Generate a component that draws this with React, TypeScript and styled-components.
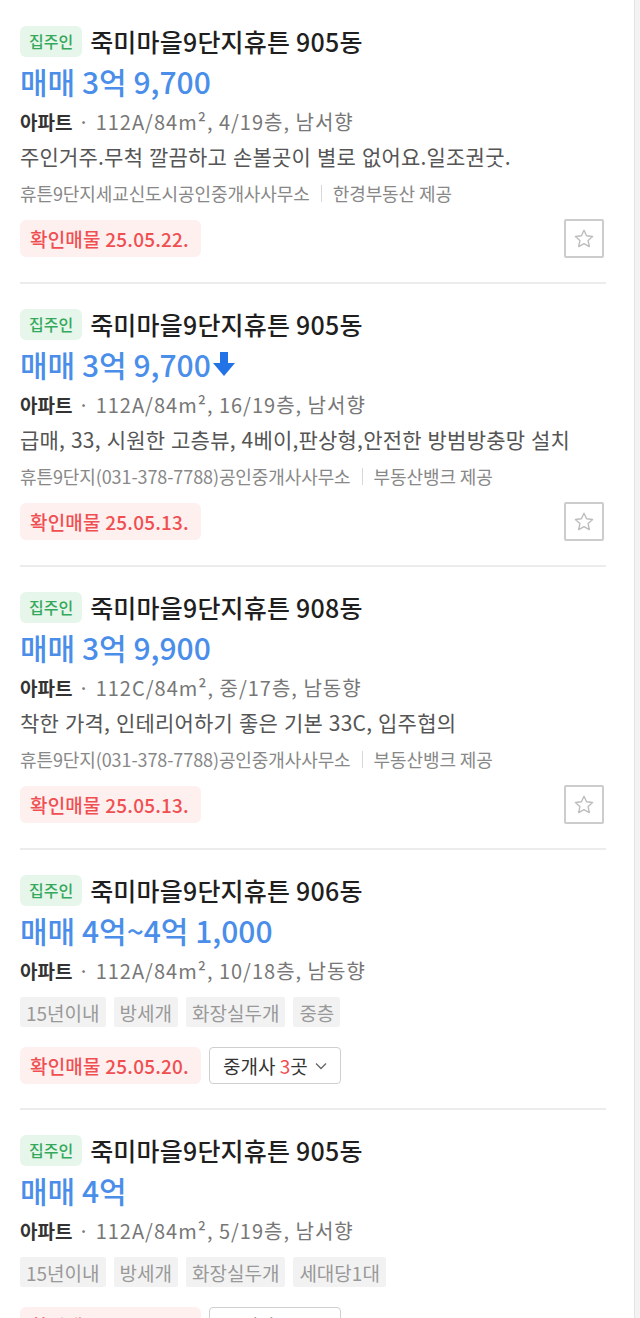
import React from "react";
import styled, { createGlobalStyle } from "styled-components";

const GlobalStyle = createGlobalStyle`
  html, body {
    margin: 0;
    padding: 0;
    background: #ffffff;
    overflow: hidden;
  }
  body {
    font-family: "Noto Sans CJK KR", "Noto Sans", sans-serif;
    -webkit-font-smoothing: antialiased;
  }
  * { box-sizing: border-box; }
`;

const Page = styled.div`
  display: flex;
  width: 640px;
  height: 1318px;
  overflow: hidden;
  background: #fff;
`;

const List = styled.ul`
  flex: 1;
  margin: 0;
  padding: 1px 28px 0 20px;
  list-style: none;
`;

const Gutter = styled.div`
  width: 6px;
  flex-shrink: 0;
  background: #f3f3f3;
  border-left: 1px solid #e4e4e4;
`;

const Item = styled.li`
  display: flex;
  flex-direction: column;
  padding: 24px 0 24px;
  border-bottom: 2px solid #ececec;
`;

const TitleRow = styled.div`
  display: flex;
  align-items: center;
  gap: 8px;
  height: 32px;
`;

const OwnerTag = styled.span`
  display: inline-flex;
  align-items: center;
  height: 31px;
  padding: 0 9px;
  border-radius: 6px;
  background: #e7f6eb;
  color: #34a95c;
  font-size: 16px;
  font-weight: 500;
`;

const Title = styled.h3`
  margin: 0;
  font-size: 25px;
  font-weight: 500;
  color: #1f1f1f;
  letter-spacing: 0.2px;
`;

const Price = styled.div`
  display: flex;
  align-items: center;
  gap: 1px;
  margin-top: 6px;
  height: 36px;
  font-size: 30px;
  font-weight: 500;
  color: #4a8eea;
`;

const Info = styled.div`
  margin-top: 6px;
  line-height: 34px;
  font-size: 20px;
  color: #777;
  font-weight: 400;
  letter-spacing: 1px;
  white-space: nowrap;
`;

const TypeName = styled.strong`
  color: #333;
  font-weight: 700;
  font-size: 19px;
  letter-spacing: 0;
`;

const Desc = styled.div`
  line-height: 34px;
  font-size: 21px;
  color: #555;
  letter-spacing: 0.2px;
  word-spacing: 1px;
  white-space: nowrap;
`;

const BrokerLine = styled.div`
  display: flex;
  align-items: center;
  margin-top: 8px;
  line-height: 24px;
  font-size: 18px;
  color: #888;
  letter-spacing: -0.1px;
  white-space: nowrap;
`;

const Divider = styled.span`
  width: 1px;
  height: 17px;
  margin: 0 11px;
  background: #d8d8d8;
`;

const Chips = styled.div`
  display: flex;
  gap: 8px;
  margin-top: 9px;
`;

const Chip = styled.span`
  display: inline-flex;
  align-items: center;
  height: 30px;
  padding: 0 6px;
  border-radius: 2px;
  background: #f2f2f2;
  color: #999;
  font-size: 19px;
`;

const Footer = styled.div<{ $gap: number }>`
  display: flex;
  align-items: center;
  gap: 8px;
  margin-top: ${(p) => p.$gap}px;
`;

const Confirm = styled.span`
  display: inline-flex;
  align-items: center;
  height: 37px;
  padding: 0 12px 0 10px;
  border-radius: 6px;
  background: #fff0f0;
  color: #f04f52;
  font-size: 19px;
  font-weight: 500;
  letter-spacing: 0.2px;
`;

const BrokerButton = styled.button`
  display: inline-flex;
  align-items: center;
  gap: 7px;
  height: 37px;
  padding: 0 13px;
  border: 1px solid #cfcfcf;
  border-radius: 4px;
  background: #fff;
  color: #333;
  font-family: inherit;
  font-size: 19px;
`;

const Count = styled.span`
  color: #f04f52;
`;

const StarButton = styled.button`
  display: inline-flex;
  align-items: center;
  justify-content: center;
  width: 40px;
  height: 39px;
  margin-left: auto;
  margin-right: 2px;
  padding: 0;
  border: 2px solid #cccccc;
  border-radius: 2px;
  background: #fff;
`;

const DownArrow = () => (
  <svg width="24" height="26" viewBox="0 0 24 26" aria-hidden>
    <path d="M8 1h8v11h7L12 25 1 12h7z" fill="#2274e6" />
  </svg>
);

const StarIcon = () => (
  <svg width="24" height="24" viewBox="0 0 24 24" aria-hidden>
    <path
      d="M12 3.2l2.6 5.6 6 .7-4.5 4.1 1.2 6-5.3-3-5.3 3 1.2-6-4.5-4.1 6-.7z"
      fill="none"
      stroke="#bdbdbd"
      strokeWidth="1.4"
      strokeLinejoin="round"
    />
  </svg>
);

const Chevron = () => (
  <svg width="12" height="8" viewBox="0 0 12 8" aria-hidden>
    <path d="M1 1.5l5 5 5-5" fill="none" stroke="#666" strokeWidth="1.3" />
  </svg>
);

type Listing = {
  dong: string;
  price: string;
  drop?: boolean;
  spec: string;
  desc?: string;
  broker?: string;
  provider?: string;
  chips?: string[];
  confirm: string;
  brokers?: number;
};

const listings: Listing[] = [
  {
    dong: "905동",
    price: "매매 3억 9,700",
    spec: "112A/84m², 4/19층, 남서향",
    desc: "주인거주.무척 깔끔하고 손볼곳이 별로 없어요.일조권굿.",
    broker: "휴튼9단지세교신도시공인중개사사무소",
    provider: "한경부동산 제공",
    confirm: "25.05.22.",
  },
  {
    dong: "905동",
    price: "매매 3억 9,700",
    drop: true,
    spec: "112A/84m², 16/19층, 남서향",
    desc: "급매, 33, 시원한 고층뷰, 4베이,판상형,안전한 방범방충망 설치",
    broker: "휴튼9단지(031-378-7788)공인중개사사무소",
    provider: "부동산뱅크 제공",
    confirm: "25.05.13.",
  },
  {
    dong: "908동",
    price: "매매 3억 9,900",
    spec: "112C/84m², 중/17층, 남동향",
    desc: "착한 가격, 인테리어하기 좋은 기본 33C, 입주협의",
    broker: "휴튼9단지(031-378-7788)공인중개사사무소",
    provider: "부동산뱅크 제공",
    confirm: "25.05.13.",
  },
  {
    dong: "906동",
    price: "매매 4억~4억 1,000",
    spec: "112A/84m², 10/18층, 남동향",
    chips: ["15년이내", "방세개", "화장실두개", "중층"],
    confirm: "25.05.20.",
    brokers: 3,
  },
  {
    dong: "905동",
    price: "매매 4억",
    spec: "112A/84m², 5/19층, 남서향",
    chips: ["15년이내", "방세개", "화장실두개", "세대당1대"],
    confirm: "25.05.17.",
    brokers: 2,
  },
];

export default function App() {
  return (
    <>
      <GlobalStyle />
      <Page>
        <List>
          {listings.map((l, i) => (
            <Item key={i}>
              <TitleRow>
                <OwnerTag>집주인</OwnerTag>
                <Title>죽미마을9단지휴튼 {l.dong}</Title>
              </TitleRow>
              <Price>
                <span>{l.price}</span>
                {l.drop && <DownArrow />}
              </Price>
              <Info>
                <TypeName>아파트</TypeName> · {l.spec}
              </Info>
              {l.desc && <Desc>{l.desc}</Desc>}
              {l.broker && (
                <BrokerLine>
                  <span>{l.broker}</span>
                  <Divider />
                  <span>{l.provider}</span>
                </BrokerLine>
              )}
              {l.chips && (
                <Chips>
                  {l.chips.map((c) => (
                    <Chip key={c}>{c}</Chip>
                  ))}
                </Chips>
              )}
              <Footer $gap={l.chips ? 20 : 14}>
                <Confirm>확인매물 {l.confirm}</Confirm>
                {l.brokers ? (
                  <BrokerButton>
                    <span>
                      중개사 <Count>{l.brokers}</Count>곳
                    </span>
                    <Chevron />
                  </BrokerButton>
                ) : (
                  <StarButton aria-label="관심">
                    <StarIcon />
                  </StarButton>
                )}
              </Footer>
            </Item>
          ))}
        </List>
        <Gutter />
      </Page>
    </>
  );
}
